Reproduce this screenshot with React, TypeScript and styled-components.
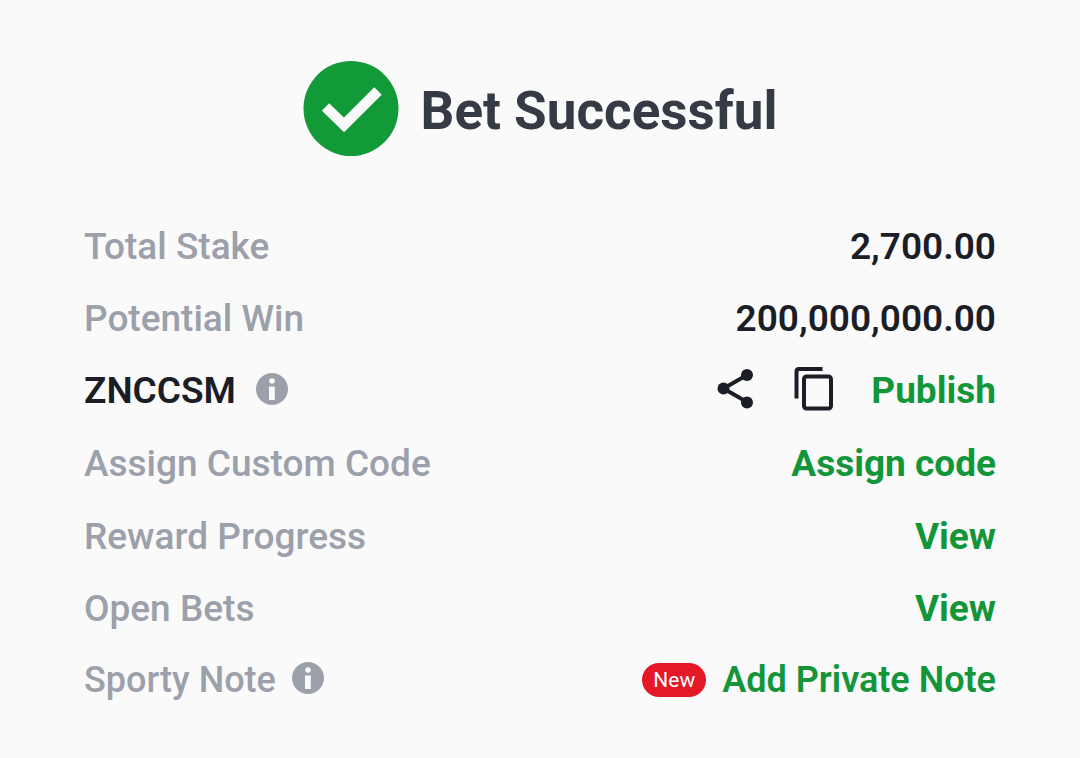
import React from 'react';
import styled, { createGlobalStyle } from 'styled-components';

const Global = createGlobalStyle`
  * { box-sizing: border-box; }
  body { margin: 0; background: #fafafa; font-family: Roboto, "Liberation Sans", sans-serif; color: #1b1e26; }
`;
const Page = styled.main`padding: 60px 84px 40px;`;
const Header = styled.header`
  display: flex; align-items: center; justify-content: center; gap: 22px; margin-bottom: 55px;
`;
const Title = styled.h1`
  margin: 0; padding-top: 6px; font-size: 53px; line-height: 64px; font-weight: 700; color: #353a45; white-space: nowrap;
`;
const List = styled.ul`margin: 0; padding: 0; list-style: none;`;
const Row = styled.li<{ $tall?: boolean; $compact?: boolean }>`
  display: flex; align-items: center; justify-content: space-between;
  min-height: ${p => (p.$tall ? 74 : p.$compact ? 70 : 72)}px;
  font-size: ${p => (p.$compact ? 36 : 37)}px; line-height: 44px; white-space: nowrap;
`;
const Side = styled.div`display: flex; align-items: center;`;
const Label = styled.span<{ $strong?: boolean }>`
  font-weight: ${p => (p.$strong ? 600 : 500)};
  color: ${p => (p.$strong ? '#1b1e26' : '#9ca0ab')};
`;
const Value = styled.span`font-weight: 600;`;
const Action = styled.button<{ $weight?: number }>`
  border: 0; padding: 0; background: none; font: inherit; font-weight: ${p => p.$weight ?? 700};
  color: #129639; cursor: pointer;
`;
const IconButton = styled.button<{ $after: number }>`
  display: flex; border: 0; padding: 0 0 4px; background: none; color: inherit; cursor: pointer;
  margin-right: ${p => p.$after}px;
`;
const InfoButton = styled(IconButton)<{ $before: number }>`margin-left: ${p => p.$before}px;`;
const Badge = styled.span`
  display: flex; align-items: center; justify-content: center; width: 64px; height: 34px; margin-right: 16px;
  border-radius: 17px; background: #e41827; color: #fff; font-size: 21px; line-height: 24px; font-weight: 400;
`;

const Info = ({ before }: { before: number }) => (
  <InfoButton $after={0} $before={before} aria-label="More information">
    <svg width="32" height="32" viewBox="0 0 32 32">
      <circle cx="16" cy="16" r="16" fill="#9ca0ab" />
      <circle cx="16" cy="8" r="2.8" fill="#fafafa" />
      <path d="M13 13.5H18.8V27H13Z" fill="#fafafa" />
    </svg>
  </InfoButton>
);

export default function App() {
  return (
    <>
      <Global />
      <Page>
        <Header>
          <svg width="96" height="96" viewBox="0 0 96 96" aria-hidden="true">
            <circle cx="48" cy="48.5" r="47.5" fill="#129a38" />
            <path d="M22.5 47L41 65L75 31" fill="none" stroke="#fafafa" strokeWidth="10.5" />
          </svg>
          <Title>Bet Successful</Title>
        </Header>
        <List>
          <Row><Label>Total Stake</Label><Value>2,700.00</Value></Row>
          <Row><Label>Potential Win</Label><Value>200,000,000.00</Value></Row>
          <Row>
            <Side><Label $strong>ZNCCSM</Label><Info before={20} /></Side>
            <Side>
              <IconButton $after={40} aria-label="Share">
                <svg width="38" height="40" viewBox="0 0 38 40">
                  <path d="M31 6L7.5 19.5L31 33" fill="none" stroke="currentColor" strokeWidth="4" />
                  <circle cx="31" cy="6" r="6" fill="currentColor" />
                  <circle cx="7.5" cy="19.5" r="6" fill="currentColor" />
                  <circle cx="31" cy="33.500" r="6" fill="currentColor" />
                </svg>
              </IconButton>
              <IconButton $after={37} aria-label="Copy code">
                <svg width="40" height="44" viewBox="0 0 40 44" fill="none" stroke="currentColor" strokeWidth="4">
                  <path d="M2.500 31.500V4.500Q2.500 2 5 2H28.500" />
                  <rect x="10" y="9.500" width="27" height="32" rx="2.500" />
                </svg>
              </IconButton>
              <Action>Publish</Action>
            </Side>
          </Row>
          <Row $tall><Label>Assign Custom Code</Label><Action>Assign code</Action></Row>
          <Row><Label>Reward Progress</Label><Action>View</Action></Row>
          <Row><Label>Open Bets</Label><Action>View</Action></Row>
          <Row $compact>
            <Side><Label>Sporty Note</Label><Info before={16} /></Side>
            <Side><Badge>New</Badge><Action $weight={600}>Add Private Note</Action></Side>
          </Row>
        </List>
      </Page>
    </>
  );
}
